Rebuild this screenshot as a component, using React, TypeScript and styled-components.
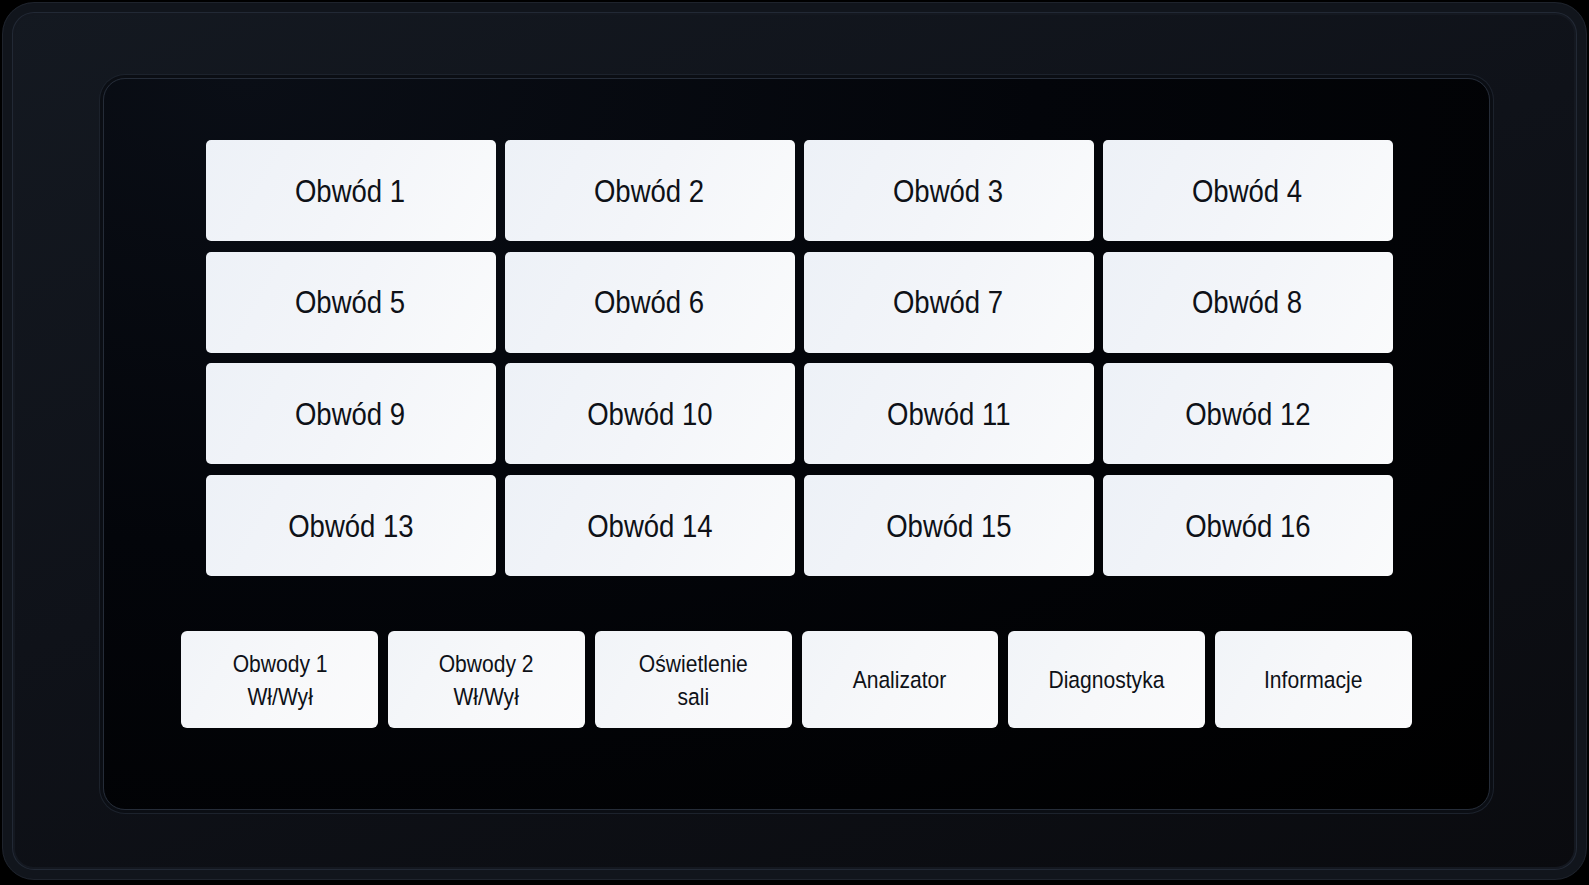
import React from "react";
import styled, { createGlobalStyle } from "styled-components";

const GlobalStyle = createGlobalStyle`
  html, body {
    margin: 0;
    padding: 0;
    background: #000;
    overflow: hidden;
  }
  body {
    font-family: "Liberation Sans", Arial, sans-serif;
  }
`;

const Stage = styled.div`
  width: 1589px;
  height: 885px;
  padding: 2px 2px 0;
  box-sizing: border-box;
  background: #000;
`;

const Bezel = styled.div`
  height: 878px;
  box-sizing: border-box;
  padding: 75px 96px 69px 100px;
  border-radius: 32px;
  background: linear-gradient(160deg, #141921 0%, #0f1219 45%, #0a0b0f 100%);
  border: 1px solid #1e232c;
  box-shadow: inset 0 0 0 9px #11151c, inset 0 0 0 10px #222935,
    inset 0 0 0 12px #141820;
`;

const Screen = styled.div`
  height: 100%;
  box-sizing: border-box;
  display: flex;
  flex-direction: column;
  align-items: center;
  padding-top: 61px;
  border-radius: 22px;
  background: radial-gradient(
    ellipse at 10% 0%,
    #0a0e16 0%,
    #03050a 45%,
    #000 100%
  );
  border: 1px solid #252c38;
  box-shadow: 0 0 0 3px #0b0e14, 0 0 0 4px #1c222c;
`;

const CircuitGrid = styled.div`
  display: grid;
  grid-template-columns: repeat(4, 290px);
  grid-auto-rows: 101px;
  column-gap: 9px;
  row-gap: 10.7px;
  margin-left: 5px;
`;

const Tile = styled.button`
  display: flex;
  align-items: center;
  justify-content: center;
  padding: 0;
  border: none;
  border-radius: 5px;
  background: linear-gradient(120deg, #edf1f7 0%, #f3f5f9 50%, #fafbfc 100%);
  color: #0e1117;
  font-family: inherit;
  font-size: 32px;
  line-height: 1;
  cursor: pointer;
`;

/* narrow lettering on the panel keys */
const Label = styled.span`
  display: inline-block;
  transform: scaleX(0.86);
  white-space: pre-line;
`;

const MenuRow = styled.div`
  display: grid;
  grid-template-columns: repeat(6, 196.7px);
  column-gap: 10px;
  margin-top: 55px;
  height: 97px;
`;

const MenuButton = styled(Tile)`
  border-radius: 6px;
  font-size: 24.5px;
  line-height: 33px;
  text-align: center;
  background: linear-gradient(120deg, #f1f4f8 0%, #f7f8fa 50%, #fbfbfc 100%);
`;

const circuits = Array.from({ length: 16 }, (_, i) => `Obwód ${i + 1}`);

const menu = [
  "Obwody 1\nWł/Wył",
  "Obwody 2\nWł/Wył",
  "Oświetlenie\nsali",
  "Analizator",
  "Diagnostyka",
  "Informacje",
];

export default function App() {
  return (
    <>
      <GlobalStyle />
      <Stage>
        <Bezel>
          <Screen>
            <CircuitGrid>
              {circuits.map((label) => (
                <Tile key={label}>
                  <Label>{label}</Label>
                </Tile>
              ))}
            </CircuitGrid>
            <MenuRow>
              {menu.map((label) => (
                <MenuButton key={label}>
                  <Label>{label}</Label>
                </MenuButton>
              ))}
            </MenuRow>
          </Screen>
        </Bezel>
      </Stage>
    </>
  );
}
